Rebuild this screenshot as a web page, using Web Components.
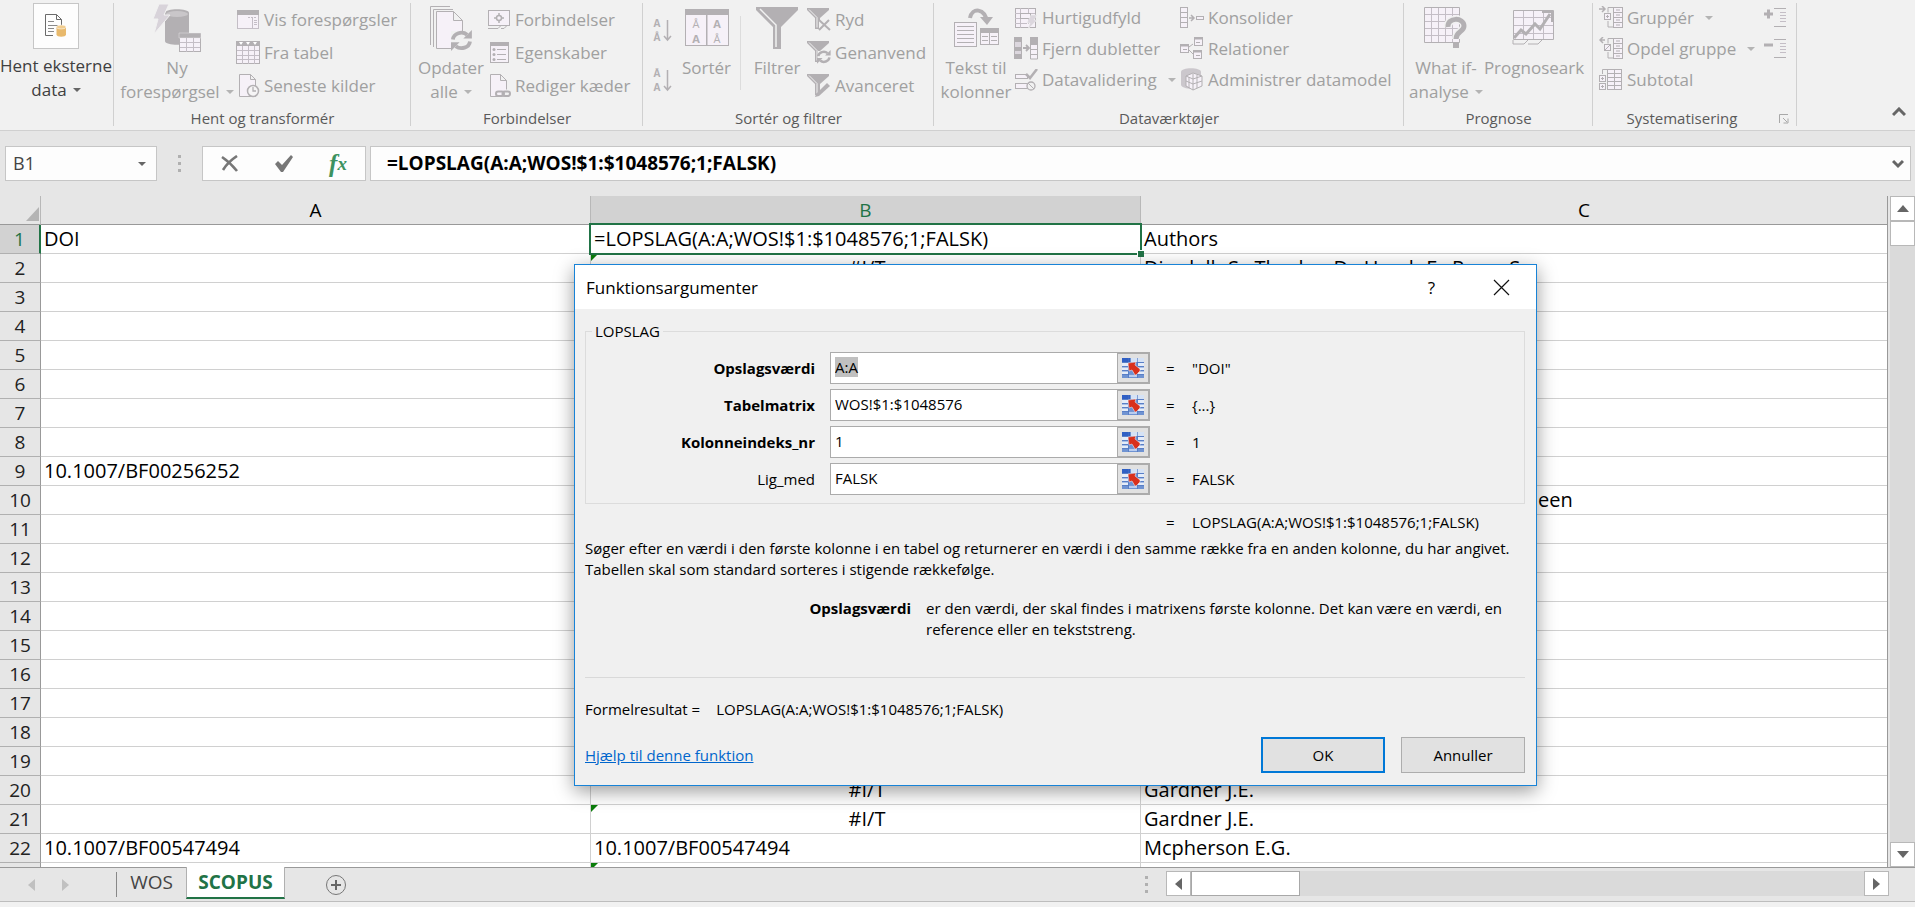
<!DOCTYPE html>
<html lang="da">
<head>
<meta charset="utf-8">
<title>Regneark – Funktionsargumenter</title>
<style>
  html, body { margin: 0; height: 100%; }
  body { font-family: "Open Sans", "Noto Sans", sans-serif; font-size: 17px; color: #000; background: #e6e6e6; overflow: hidden; }
</style>
</head>
<body>
<sheet-app></sheet-app>

<script>
/* ---------- icon library ---------- */
const G = '#b3b0b3', P = '#c4bec6', F = '#f6f1f8';
const svg = (w, h, body) => `<svg width="${w}" height="${h}" viewBox="0 0 ${w} ${h}" fill="none" stroke="${P}" aria-hidden="true">${body}</svg>`;
const funnel = `<path d="M0 0h22v2l-9 8v11h-5V10L0 2z" fill="${G}" stroke="none"/><path d="M2 1.500l8 8v10" stroke="#f1f1f1" stroke-width="1"/>`;
const refresh = (x, y, s) => `<g transform="translate(${x} ${y}) scale(${s})" stroke="${G}" stroke-width="4"><path d="M2 10a9 8 0 0 1 15-5"/><path d="M20 12a9 8 0 0 1-15 5"/><path d="M22 0v9h-9z" fill="${G}" stroke="none"/><path d="M0 22v-9h9z" fill="${G}" stroke="none"/></g>`;
const letter = (x, y, t, s, w) => `<text x="${x}" y="${y}" font-family="Open Sans" font-size="${s}" font-weight="${w}" fill="${G}" stroke="none" text-anchor="middle">${t}</text>`;
const outline = mark => `<path d="M14 1.500h-5v5M9 15v6h5" stroke="${G}"/><rect x="5.500" y="7.500" width="6" height="6" fill="${F}" stroke="${G}"/>${mark}<rect x="14.500" y="1.500" width="9" height="20" fill="${F}" stroke="${G}"/><path d="M14 6.500h9M14 11.500h9M14 16.500h9M17 4h4M17 9h4M17 14h4M17 19h4" stroke="${G}"/>`;

const ICONS = {
  external: svg(24, 26, `<path d="M1.500 1.500h11l5 5v8M12.500 1.500v5h5M9 22.500H1.500v-21" stroke="#6a6a6a"/><path d="M4 8.500h6M4 12.500h10M4 15.500h6M4 18.500h6" stroke="#8a8a8a"/><path d="M12.500 14v7.500c0 3 9.500 3 9.500 0V14z" fill="#e8b96c" stroke="none"/><ellipse cx="17.200" cy="14" rx="4.800" ry="2" fill="#f1cd90" stroke="#fff" stroke-width=".5"/>`),
  query: svg(48, 49, `<path d="M12 9c0-5 24-5 24 0v28c0 5-24 5-24 0z" fill="${G}" stroke="none"/><ellipse cx="24" cy="10" rx="11" ry="3" fill="#c9c6c9" stroke="none"/><path d="M6 0h10l-5 11h6L1 30l4-15H0z" fill="#d8d3da" stroke="#f1f1f1"/><rect x="26.500" y="29.500" width="21" height="18" fill="${F}" stroke="${G}"/><path d="M26 29h22v5H26z" fill="${G}" stroke="#f1f1f1" stroke-width=".4"/><path d="M33.500 34v14M40.500 34v14M27 38.500h20M27 43.500h20"/>`),
  show: svg(24, 22, `<rect x="1.500" y="1.500" width="21" height="18" fill="${F}"/><path d="M1 1h22v5H1z" fill="${G}" stroke="none"/><path d="M12 8.500h9" stroke-dasharray="2 1"/><path d="M16.500 9v10M18 11.500h3M18 13.500h3M18 15.500h3"/>`),
  table: svg(24, 24, `<rect x=".500" y=".500" width="23" height="22" fill="${F}" stroke="${G}"/><path d="M0 0h24v5H0z" fill="${G}" stroke="none"/><path d="M3 1h4l-2 3zM10 1h4l-2 3zM17 1h4l-2 3z" fill="#fff" stroke="none"/><path d="M6.500 5v18M12.500 5v18M18.500 5v18M1 9.500h22M1 14.500h22M1 18.500h22"/>`),
  recent: svg(24, 24, `<path d="M3.500.500h11l5 5v17h-16zM14.500.500v5h5" fill="${F}" stroke="${G}"/><circle cx="17" cy="17" r="5.500" fill="#f6f5f6" stroke="${G}" stroke-width="1.500"/><path d="M17 13v4h3" stroke="${G}" stroke-width="1.300"/>`),
  refreshAll: svg(44, 46, `<path d="M21 1.500H1.500V40M24 4.500H4.500V42" stroke="${G}"/><path d="M7.500 6.500h17l9 9v28h-26zM24.500 6.500v9h9" fill="${F}" stroke="${G}"/><path d="M22 26h22v20H22z" fill="#f1f1f1" stroke="none"/>${refresh(22, 25, .95)}`),
  connections: svg(24, 22, `<rect x="1.500" y="1.500" width="21" height="15" fill="${F}" stroke="${G}"/><path d="M1 19.500h10l3-3M14 19.500h3l3-3" stroke="${G}"/><circle cx="12" cy="9" r="2.500" stroke="${G}" stroke-width="1.500"/><path d="M12 4v3M12 11v3M7 9h3M14 9h3" stroke="${G}" stroke-width="1.500"/>`),
  properties: svg(24, 23, `<rect x="3.500" y="1.500" width="18" height="20" fill="${F}" stroke="${G}"/><path d="M3 1h19v4H3z" fill="${G}" stroke="none"/><path d="M10 8.500h9M10 13.500h9M10 18.500h9" stroke="${G}"/><g fill="${G}" stroke="none"><circle cx="7" cy="8.500" r="1.500"/><circle cx="7" cy="13.500" r="1.500"/><circle cx="7" cy="18.500" r="1.500"/></g>`),
  links: svg(24, 24, `<path d="M12 22.500H3.500V.500h10l6 6v9M13.500.500v6h6" fill="${F}" stroke="${G}"/><rect x="9" y="17.500" width="8" height="4.500" rx="2.200" stroke="${G}" stroke-width="2"/><rect x="15.500" y="17.500" width="7.500" height="4.500" rx="2.200" stroke="${G}" stroke-width="2"/>`),
  sortAsc: svg(20, 25, `${letter(5, 9, 'A', 10, 700)}${letter(5, 23, 'Å', 10, 700)}<path d="M15.500 2v20M12 18l3.500 4 3.500-4" stroke="${G}" stroke-width="1.500"/>`),
  sortDesc: svg(20, 25, `${letter(5, 9, 'Å', 10, 700)}${letter(5, 23, 'A', 10, 700)}<path d="M15.500 2v20M12 18l3.500 4 3.500-4" stroke="${G}" stroke-width="1.500"/>`),
  sort: svg(44, 38, `<rect x=".500" y=".500" width="43" height="36" fill="${F}" stroke="${G}"/><path d="M0 0h44v6H0zM21 6h1.500v31H21z" fill="${G}" stroke="none"/>${letter(11, 19, 'Å', 11, 400)}${letter(11, 34, 'A', 11, 700)}${letter(32, 19, 'A', 11, 700)}${letter(32, 34, 'Å', 11, 400)}`),
  filter: svg(42, 42, `<path d="M0 0h42v3L25 20v22h-8V20L0 3z" fill="${G}" stroke="none"/><path d="M4 2l16 16v22" stroke="#f1f1f1" stroke-width="1.500"/>`),
  clear: svg(24, 24, `${funnel}<path d="M12 12h12v12H12z" fill="#f1f1f1" stroke="none"/><path d="M12 12l11 10M22 12L12 22" stroke="${G}" stroke-width="2"/>`),
  reapply: svg(24, 24, `${funnel}<path d="M11 10h13v14H11z" fill="#f1f1f1" stroke="none"/>${refresh(10, 9, .62)}`),
  advanced: svg(24, 24, `${funnel}<path d="M24 8v16H8z" fill="#f1f1f1" stroke="none"/><path d="M9 20L20 9l3 3-11 10-4 1z" fill="${G}" stroke="none"/>`),
  textToCols: svg(46, 40, `<path d="M17 10c2-11 15-10 17 4" stroke="${G}" stroke-width="4"/><path d="M27 9l7 8 6-8z" fill="${G}" stroke="none"/><rect x="1.500" y="14.500" width="22" height="24" fill="${F}" stroke="${G}"/><path d="M4 18.500h17M4 22.500h17M4 26.500h17M4 30.500h17M4 34.500h17" stroke="${G}"/><rect x="27.500" y="20.500" width="18" height="16" fill="${F}" stroke="${G}"/><path d="M27 20h19v5H27z" fill="${G}" stroke="none"/><path d="M36.500 25v12M29 28.500h6M29 32.500h6M38 28.500h6M38 32.500h6" stroke="${G}"/>`),
  flash: svg(24, 22, `<rect x="1.500" y="1.500" width="20" height="19" fill="${F}" stroke="${G}"/><path d="M1 6.500h20M1 11.500h20M1 16.500h12M6.500 1v5M6.500 11v10M14.500 1v5M14.500 11v6"/><rect x="6.500" y="6.500" width="10" height="5" stroke="${G}"/><path d="M17 8h6l-3 5h3l-9 9 2-6h-3z" fill="#dcd7de" stroke="#f1f1f1" stroke-width=".5"/>`),
  dupes: svg(24, 23, `<path d="M0 0h8v22H0zM16 0h8v8h-8z" fill="${G}" stroke="none"/><path d="M1 5h6v5H1zM1 14h6v3H1z" fill="#dcd7de" stroke="none"/><path d="M16.500 8v14h7V8M16.500 12.500h7M16.500 17.500h7" fill="${F}" stroke="${G}"/><path d="M9 11h5M12 8l3 3-3 3" stroke="${G}" stroke-width="1.800"/>`),
  validate: svg(24, 22, `<rect x="1.500" y="5.500" width="12" height="4" fill="${F}" stroke="${G}"/><rect x="1.500" y="14.500" width="12" height="5" fill="${F}" stroke="${G}"/><path d="M12 5l4 4 7-9" stroke="${G}" stroke-width="2.500"/><circle cx="17" cy="17" r="4" fill="#f1f1f1" stroke="${G}" stroke-width="1.300"/><path d="M14 14l6 6" stroke="${G}"/>`),
  consolidate: svg(24, 22, `<rect x=".500" y=".500" width="7" height="20" fill="${F}" stroke="${G}"/><path d="M1 5.500h6M1 10.500h6M1 15.500h6" stroke="${G}"/><path d="M9 11h5M11 8l3 3-3 3" stroke="${G}" stroke-width="1.500"/><rect x="16.500" y="9.500" width="7" height="3" fill="${F}" stroke="${G}"/>`),
  relations: svg(24, 23, `<g fill="${F}" stroke="${G}"><rect x=".500" y="7.500" width="8" height="8"/><rect x="14.500" y=".500" width="8" height="8"/><rect x="13.500" y="13.500" width="8" height="8"/></g><path d="M1 8.500h8M14 1.500h9M13 14.500h9" stroke="${G}" stroke-width="2"/><path d="M9 10l4-3M9 13l4 4M3 12.500h4M16 5.500h4M16 18.500h4" stroke="${G}"/>`),
  model: svg(24, 23, `<path d="M1 4c0-5 20-5 20 0v13c-2 5-18 5-20 0z" fill="#cbc7cc" stroke="none"/><path d="M13 5l9 3v10l-9 4-7-4V8z" fill="${F}" stroke="${G}"/><path d="M13 6v16M6 8l7 3 9-3M6 13l7 3 9-3M17 7v13M9 9v11" stroke="${G}"/>`),
  whatIf: svg(44, 42, `<path d="M.500.500h35v35H.500z" fill="${F}" stroke="${G}"/><path d="M7.500 1v34M14.500 1v34M21.500 1v34M28.500 1v34M1 7.500h34M1 14.500h34M1 21.500h34M1 28.500h34"/><path d="M24 20c-1-10 17-10 16-1 0 6-8 5-8 13" stroke="#f1f1f1" stroke-width="8"/><path d="M24 20c-1-10 16-10 16-1 0 6-8 5-8 13" stroke="${G}" stroke-width="5"/><path d="M29 36h6v5h-6z" fill="${G}" stroke="none"/>`),
  forecast: svg(44, 38, `<path d="M1.500 1.500h40v29h-40z" fill="${F}" stroke="${G}"/><path d="M11.500 2v28M21.500 2v28M31.500 2v28M2 8.500h39M2 16.500h39M2 24.500h39"/><path d="M1 31v4h11l4-4M16 35h10l4-4" stroke="${G}"/><path d="M2 29l7-8 5 4 9-10 5 5L38 5" stroke="${G}" stroke-width="3"/><path d="M30 3h10v10" stroke="${G}" stroke-width="2"/>`),
  group: svg(24, 23, outline(`<path d="M7 10.500h3M8.500 9v3" stroke="${G}"/><path d="M0 3h5M3 0l3 3-3 3" stroke="${G}" stroke-width="1.500"/>`)),
  ungroup: svg(24, 23, outline(`<path d="M6 13l5-5" stroke="${G}"/><path d="M6 3H1M4 0L1 3l3 3" stroke="${G}" stroke-width="1.500"/>`)),
  subtotal: svg(24, 23, `<path d="M3.500 6V1.500H8" stroke="${G}"/><rect x="8.500" y="1.500" width="14" height="20" fill="${F}" stroke="${G}"/><path d="M15.500 1v20M8 5.500h15M8 9.500h15M8 13.500h15M8 17.500h15" stroke="${G}"/><rect x=".500" y="7.500" width="6" height="6" fill="${F}" stroke="${G}"/><rect x=".500" y="15.500" width="6" height="6" fill="${F}" stroke="${G}"/><path d="M2 10.500h3M3.500 9v3M2 18.500h3M3.500 17v3" stroke="${G}"/>`),
  expand: svg(23, 20, `<path d="M0 6h9M4.500 1.500v9" stroke="${G}" stroke-width="3"/><path d="M10 .500h12M10 18.500h12" stroke="${G}"/><path d="M16 4.500h6M16 7.500h6M16 10.500h6M16 13.500h6"/>`),
  collapse: svg(23, 20, `<path d="M0 6h9" stroke="${G}" stroke-width="3"/><path d="M10 .500h12M10 18.500h12" stroke="${G}"/><path d="M16 4.500h6M16 7.500h6M16 10.500h6M16 13.500h6"/>`),
  launcher: svg(10, 10, `<path d="M.500 9V.500H9M4 4l4 4M9 4.500V9H4.500" stroke="#a8a8a8"/>`),
  chevronUp: svg(14, 10, `<path d="M1 8l6-6 6 6" stroke="#666" stroke-width="3"/>`),
  chevronDown: svg(12, 10, `<path d="M1 2l5 5 5-5" stroke="#666" stroke-width="3"/>`),
  cancel: svg(18, 17, `<path d="M1 2c6 4 11 9 15 14M16 1C10 5 5 10 2 15" stroke="#777" stroke-width="2.600"/>`),
  accept: svg(20, 17, `<path d="M1 9l3-3 4 4L17 0l2 2L9 17H7z" fill="#777" stroke="none"/>`),
  close: svg(17, 17, `<path d="M1 1l15 15M16 1L1 16" stroke="#111" stroke-width="1.200"/>`),
  add: svg(22, 22, `<circle cx="11" cy="11" r="9.500" stroke="#777"/><path d="M11 6v10M6 11h10" stroke="#666" stroke-width="2"/>`),
  corner: svg(14, 14, `<path d="M13 0v14H0z" fill="#b4b4b4" stroke="none"/>`),
  pick: svg(24, 22, `<rect x="1" y="1" width="22" height="20" fill="#6f93d2" stroke="none"/><path d="M1 1h8v4H1z" fill="#2f5fc4" stroke="none"/><path d="M10 1h13v4H10z" fill="#d5e2f5" stroke="none"/><path d="M1 6h6v3H1zM1 10.500h6V13H1zM1 14.500h6V17H1zM17 6h6v3h-6zM17 10.500h6V13h-6zM17 14.500h6V17h-6z" fill="#e4ecf9" stroke="none"/><path d="M8 17h8v3H8z" fill="#b9cdf0" stroke="none"/><path d="M1 5.500h22M1 9.500h22M1 13.500h22M1 17.500h22M7.500 1v20M16.500 1v20" stroke="#4a72bd" stroke-width=".6"/><path d="M7 6l8-1-1 3 5 4v2l-4 4h-1l-3-5-3 1z" fill="#d9301c" stroke="#fff" stroke-width=".5"/>`),
};
for (const [name, dir] of Object.entries({ up: 'M0 7l6-7 6 7z', down: 'M0 0h12l-6 7z' })) ICONS['arrow-' + name] = svg(12, 7, `<path d="${dir}" fill="#666" stroke="none"/>`);
for (const [name, dir] of Object.entries({ left: 'M7 0v12L0 6z', right: 'M0 0v12l7-6z' })) ICONS['arrow-' + name] = svg(7, 12, `<path d="${dir}" fill="currentColor" stroke="none"/>`);

const define = (name, html, setup) => customElements.define(name, class extends HTMLElement {
  constructor() { super(); this.attachShadow({ mode: 'open' }).innerHTML = html; }
  connectedCallback() { setup && setup(this, this.shadowRoot); }
});

define('ui-icon', '<style>:host{display:inline-flex;flex:none}svg{display:block}</style><span></span>',
  (host, root) => { root.querySelector('span').innerHTML = ICONS[host.getAttribute('name')]; });

/* ---------- ribbon ---------- */
define('ribbon-group', `<style>
  :host { display: flex; flex-direction: column; height: 130px; box-sizing: border-box; position: relative; }
  :host::after { content: ""; position: absolute; right: 0; top: 3px; bottom: 4px; width: 1px; background: #d0d0d0; }
  .body { display: flex; height: 106px; }
  footer { display: flex; align-items: center; justify-content: center; height: 24px; line-height: 24px; font-size: 15px; color: #5a5a5a; }
  :host([launcher]) footer { padding-right: 26px; }
  ::slotted([slot=launcher]) { position: absolute; right: 8px; bottom: 6px; }
</style><div class="body"><slot></slot></div><footer><span></span><slot name="launcher"></slot></footer>`,
  (host, root) => { root.querySelector('span').textContent = host.getAttribute('label') || ''; });

define('ribbon-stack', `<style>
  :host { display: flex; flex-direction: column; padding-top: 2px; box-sizing: border-box; --row: 31px; }
  :host([loose]) { padding-top: 3px; --row: 33px; }
</style><slot></slot>`);

define('ribbon-button', `<style>
  :host { display: block; flex: none; }
  button { all: unset; box-sizing: border-box; display: flex; align-items: center; gap: 4px; height: var(--row, 31px); width: 100%; white-space: nowrap; color: #a0a0a0; line-height: 24px; }
  .icon { display: flex; align-items: center; justify-content: center; min-width: 24px; }
  :host([big]) button { flex-direction: column; height: auto; gap: 0; text-align: center; }
  :host([big]) .icon { height: 56px; }
  :host([enabled]) button { color: #404040; }
  :host([enabled]) .icon { height: 44px; width: 44px; margin: 3px 0 5px; background: #fdfdfd; border: 1px solid #c6c6c6; }
  .drop::after { content: ""; display: inline-block; margin-left: 6px; vertical-align: 4px; border: 4px solid transparent; border-top: 4px solid #b4b4b4; border-bottom: 0; }
  :host([wide]) .drop::after { margin-left: 11px; }
  :host([enabled]) .drop::after { border-top-color: #666; }
</style><button type="button"><span class="icon"></span><span class="text"><slot></slot></span></button>`,
  (host, root) => {
    root.querySelector('.icon').innerHTML = ICONS[host.getAttribute('icon')];
    if (host.hasAttribute('drop')) root.querySelector('.text').classList.add('drop');
    if (host.hasAttribute('label')) root.querySelector('button').setAttribute('aria-label', host.getAttribute('label'));
  });

define('data-ribbon', `<style>
  :host { display: grid; grid-template-columns: 114px 297px 232px 291px 470px 189px 204px 1fr; height: 130px; flex: none; background: #f1f1f1; border-bottom: 1px solid #d0d0d0; overflow: hidden; }
  .sorts { display: flex; flex-direction: column; gap: 20px; padding: 18px 10px 0 9px; }
  .sorts button, .fold button { all: unset; }
  .line { width: 1px; height: 74px; margin: 16px 6px 0 9px; background: #dcdcdc; flex: none; }
  .levels { margin-left: auto; padding-right: 6px; }
  .fold { display: flex; justify-content: flex-end; align-items: flex-end; padding: 0 9px 8px 0; }
  .w112 { width: 112px; } .w118 { width: 118px; } .w72 { width: 72px; } .w60 { width: 60px; } .w76 { width: 76px; } .w100 { width: 100px; }
  .pad { padding-left: 4px; } .pad6 { padding-left: 6px; }
  .first { width: 166px; }
</style>
<ribbon-group><ribbon-button big enabled drop icon="external" class="w112">Hent eksterne<br>data</ribbon-button></ribbon-group>
<ribbon-group label="Hent og transformér">
  <ribbon-button big drop icon="query" class="w118 pad">Ny<br>forespørgsel</ribbon-button>
  <ribbon-stack loose>
    <ribbon-button icon="show">Vis forespørgsler</ribbon-button>
    <ribbon-button icon="table">Fra tabel</ribbon-button>
    <ribbon-button icon="recent">Seneste kilder</ribbon-button>
  </ribbon-stack>
</ribbon-group>
<ribbon-group label="Forbindelser">
  <ribbon-button big drop icon="refreshAll" class="w72 pad">Opdater<br>alle</ribbon-button>
  <ribbon-stack loose>
    <ribbon-button icon="connections">Forbindelser</ribbon-button>
    <ribbon-button icon="properties">Egenskaber</ribbon-button>
    <ribbon-button icon="links">Rediger kæder</ribbon-button>
  </ribbon-stack>
</ribbon-group>
<ribbon-group label="Sortér og filtrer">
  <div class="sorts"><button type="button" aria-label="Sortér stigende"><ui-icon name="sortAsc"></ui-icon></button><button type="button" aria-label="Sortér faldende"><ui-icon name="sortDesc"></ui-icon></button></div>
  <ribbon-button big icon="sort">Sortér</ribbon-button>
  <div class="line"></div>
  <ribbon-button big icon="filter" class="w60">Filtrer</ribbon-button>
  <ribbon-stack loose>
    <ribbon-button icon="clear">Ryd</ribbon-button>
    <ribbon-button icon="reapply">Genanvend</ribbon-button>
    <ribbon-button icon="advanced">Avanceret</ribbon-button>
  </ribbon-stack>
</ribbon-group>
<ribbon-group label="Dataværktøjer">
  <ribbon-button big icon="textToCols" class="w76 pad">Tekst til<br>kolonner</ribbon-button>
  <ribbon-stack class="first">
    <ribbon-button icon="flash">Hurtigudfyld</ribbon-button>
    <ribbon-button icon="dupes">Fjern dubletter</ribbon-button>
    <ribbon-button icon="validate" drop wide>Datavalidering</ribbon-button>
  </ribbon-stack>
  <ribbon-stack>
    <ribbon-button icon="consolidate">Konsolider</ribbon-button>
    <ribbon-button icon="relations">Relationer</ribbon-button>
    <ribbon-button icon="model">Administrer datamodel</ribbon-button>
  </ribbon-stack>
</ribbon-group>
<ribbon-group label="Prognose">
  <ribbon-button big drop icon="whatIf" class="w76 pad">What if-<br>analyse</ribbon-button>
  <ribbon-button big icon="forecast" class="w100">Prognoseark</ribbon-button>
</ribbon-group>
<ribbon-group label="Systematisering" launcher>
  <ribbon-stack class="pad6">
    <ribbon-button icon="group" drop wide>Gruppér</ribbon-button>
    <ribbon-button icon="ungroup" drop wide>Opdel gruppe</ribbon-button>
    <ribbon-button icon="subtotal">Subtotal</ribbon-button>
  </ribbon-stack>
  <ribbon-stack class="levels">
    <ribbon-button icon="expand" label="Vis detaljer"></ribbon-button>
    <ribbon-button icon="collapse" label="Skjul detaljer"></ribbon-button>
  </ribbon-stack>
  <ui-icon slot="launcher" name="launcher"></ui-icon>
</ribbon-group>
<div class="fold"><button type="button" aria-label="Skjul båndet"><ui-icon name="chevronUp"></ui-icon></button></div>`);

/* ---------- formula bar ---------- */
define('formula-bar', `<style>
  :host { display: flex; align-items: flex-start; height: 50px; flex: none; padding: 15px 4px 0 5px; }
  .box { display: flex; align-items: center; height: 35px; box-sizing: border-box; background: #fdfdfd; border: 1px solid #c6c6c6; }
  input { all: unset; min-width: 0; flex: 1; line-height: 33px; }
  button { all: unset; display: flex; align-items: center; justify-content: center; }
  .name { width: 152px; padding: 0 10px 0 7px; color: #444; font-size: 18px; }
  .name i { border: 4px solid transparent; border-top-color: #666; border-bottom: 0; }
  .grip { width: 45px; height: 34px; display: flex; flex-direction: column; align-items: center; justify-content: center; gap: 4px; }
  .grip i { width: 3px; height: 3px; background: #b0b0b0; }
  .tools { width: 164px; margin-right: 4px; }
  .tools button { flex: 1; }
  .fx { color: #3c9260; font: italic bold 25px/28px "Liberation Serif", serif; }
  .fx small { font-size: 19px; }
  .formula { flex: 1; padding: 0 6px 0 16px; }
  .formula input { font-size: 19px; font-weight: 700; }
</style>
<div class="box name"><input aria-label="Navneboks" value="B1"><button type="button" aria-label="Vis navne"><i></i></button></div>
<div class="grip"><i></i><i></i><i></i></div>
<div class="box tools"><button type="button" aria-label="Annuller"><ui-icon name="cancel"></ui-icon></button><button type="button" aria-label="Angiv"><ui-icon name="accept"></ui-icon></button><button type="button" class="fx" aria-label="Indsæt funktion">f<small>x</small></button></div>
<div class="box formula"><input aria-label="Formellinje" value="=LOPSLAG(A:A;WOS!$1:$1048576;1;FALSK)"><button type="button" aria-label="Udvid formellinje"><ui-icon name="chevronDown"></ui-icon></button></div>`);

/* ---------- grid ---------- */
const CELLS = {
  A1: 'DOI', B1: '=LOPSLAG(A:A;WOS!$1:$1048576;1;FALSK)', C1: 'Authors',
  B2: '#I/T', C2: 'Dimdalh S., Theskar D., Hasch F., Perez S.',
  A9: '10.1007/BF00256252', C10: 'een',
  B20: '#I/T', C20: 'Gardner J.E.', B21: '#I/T', C21: 'Gardner J.E.',
  A22: '10.1007/BF00547494', B22: '10.1007/BF00547494', C22: 'Mcpherson E.G.',
};
const FLAGS = ['B2', 'B20', 'B21', 'B23'];
define('sheet-grid', `<style>
  :host { display: block; flex: 1; min-width: 0; overflow: hidden; background: #fff; border-right: 1px solid #999; }
  /* column C runs on past the right edge of the window */
  table { table-layout: fixed; width: calc(100% + 141px); border-collapse: separate; border-spacing: 0; font-size: 20px; line-height: 26px; }
  col.head { width: 41px; } col.ab { width: 550px; }
  th, td { height: 28px; padding: 0; white-space: nowrap; position: relative; font-weight: 400; }
  thead th { background: #e6e6e6; border-bottom: 1px solid #999; border-right: 1px solid #b8b8b8; font-size: 19px; }
  thead th.on { background: #d2d2d2; color: #217346; }
  thead ui-icon { position: absolute; right: 0; bottom: 3px; }
  tbody th { background: #e6e6e6; border-right: 1px solid #999; border-bottom: 1px solid #b0b0b0; font-size: 19px; color: #222; }
  tbody th.on { background: #d2d2d2; color: #217346; border-right: 2px solid #217346; }
  td { border-right: 1px solid #d0d0d0; border-bottom: 1px solid #d0d0d0; padding-left: 3px; }
  td.error { text-align: center; }
  td.flag::before { content: ""; position: absolute; left: 0; top: 0; border-top: 7px solid #0a7d0a; border-right: 7px solid transparent; }
  td.active::after { content: ""; position: absolute; z-index: 1; inset: -2px; border: 2px solid #217346; }
  td.active::before { content: ""; position: absolute; z-index: 2; right: -4px; bottom: -4px; width: 6px; height: 6px; background: #217346; border: 1px solid #fff; border-width: 1px 0 0 1px; }
  td.tail { text-indent: 394px; }
</style>
<table><colgroup><col class="head"><col class="ab"><col class="ab"><col></colgroup>
<thead><tr><th scope="col"><ui-icon name="corner"></ui-icon></th><th scope="col">A</th><th scope="col" class="on">B</th><th scope="col">C</th></tr></thead><tbody></tbody></table>`,
  (host, root) => {
    const body = root.querySelector('tbody');
    for (let r = 1; r <= 23; r++) {
      const tr = body.insertRow();
      const th = document.createElement('th');
      th.scope = 'row'; th.textContent = r <= 22 ? r : ''; if (r === 1) th.className = 'on';
      tr.append(th);
      for (const c of 'ABC') {
        const td = tr.insertCell(), id = c + r;
        td.textContent = CELLS[id] || '';
        if (CELLS[id] === '#I/T') td.classList.add('error');
        if (FLAGS.includes(id)) td.classList.add('flag');
        if (id === 'B1') td.classList.add('active');
        if (id === 'C10') td.classList.add('tail');
      }
    }
  });

define('scroll-bar', `<style>
  :host { display: flex; flex-direction: column; background: #dadada; color: #666; }
  :host([horizontal]) { flex-direction: row; }
  button, i { all: unset; box-sizing: border-box; width: 25px; height: 25px; flex: none; background: #fff; border: 1px solid #b8b8b8; display: flex; align-items: center; justify-content: center; }
  i { margin-bottom: auto; }
  :host([horizontal]) i { width: 109px; margin: 0 auto 0 0; border-color: #a8a8a8; }
</style><button type="button" class="a"></button><i></i><button type="button" class="b"></button>`,
  (host, root) => {
    const h = host.hasAttribute('horizontal');
    const a = root.querySelector('.a'), b = root.querySelector('.b');
    a.innerHTML = ICONS[h ? 'arrow-left' : 'arrow-up']; a.ariaLabel = h ? 'Rul til venstre' : 'Rul op';
    b.innerHTML = ICONS[h ? 'arrow-right' : 'arrow-down']; b.ariaLabel = h ? 'Rul til højre' : 'Rul ned';
  });

/* ---------- sheet tabs ---------- */
define('sheet-tabs', `<style>
  :host { display: flex; align-items: flex-start; height: 33px; flex: none; border-top: 1px solid #999; border-bottom: 1px solid #bdbdbd; font-size: 19px; padding-right: 26px; }
  button { all: unset; box-sizing: border-box; display: flex; align-items: center; justify-content: center; }
  .nav { display: flex; align-items: center; width: 117px; height: 25px; margin-top: 4px; padding-left: 14px; box-sizing: border-box; border-right: 1px solid #888; color: #c0c0c0; }
  .nav button { width: 34px; height: 24px; }
  .tab { height: 28px; width: 69px; color: #444; }
  .tab.on { width: 99px; height: 32px; margin-top: -1px; background: #fff; color: #217346; font-weight: 700; border: 1px solid #b0b0b0; border-width: 0 1px 2px; border-bottom-color: #217346; }
  .add { margin: 6px auto 0 40px; }
  .grip { display: flex; flex-direction: column; gap: 4px; padding: 8px 18px 0 0; }
  .grip i { width: 3px; height: 3px; background: #b0b0b0; }
  scroll-bar { width: calc(38% + 5px); margin-top: 3px; height: 25px; }
</style>
<div class="nav"><button type="button" aria-label="Forrige ark"><ui-icon name="arrow-left"></ui-icon></button><button type="button" aria-label="Næste ark"><ui-icon name="arrow-right"></ui-icon></button></div>
<button type="button" class="tab">WOS</button><button type="button" class="tab on">SCOPUS</button>
<button type="button" class="add" aria-label="Nyt ark"><ui-icon name="add"></ui-icon></button>
<div class="grip"><i></i><i></i><i></i></div>
<scroll-bar horizontal></scroll-bar>`);

/* ---------- function arguments dialog ---------- */
define('argument-row', `<style>
  :host { display: grid; grid-template-columns: 244px 320px 42px 1fr; height: 32px; align-items: center; line-height: 20px; }
  label { text-align: right; padding-right: 15px; }
  :host([required]) label { font-weight: 700; }
  .field { display: flex; height: 32px; box-sizing: border-box; border: 1px solid #ababab; background: #fff; }
  input { all: unset; flex: 1; min-width: 0; padding-left: 4px; line-height: 20px; height: 20px; margin-top: 4px; }
  input::selection { background: #c0c0c0; color: #000; }
  button { all: unset; width: 30px; border: 1px solid #ababab; background: #e1e1e1; display: flex; align-items: center; justify-content: center; }
  .eq { padding-left: 16px; }
</style><label for="f"></label><div class="field"><input id="f"><button type="button" aria-label="Vælg område"><ui-icon name="pick"></ui-icon></button></div><span class="eq">=</span><output for="f"><slot></slot></output>`,
  (host, root) => {
    root.querySelector('label').textContent = host.getAttribute('name');
    const input = root.querySelector('input');
    input.value = host.getAttribute('value');
    if (host.hasAttribute('selected')) { input.focus(); input.select(); }
  });

define('function-dialog', `<style>
  :host { display: block; box-sizing: border-box; background: #f0f0f0; border: 1px solid #1883d7; box-shadow: 0 5px 18px rgba(0,0,0,.4); font-size: 15px; line-height: 21px; }
  header { display: flex; align-items: center; height: 44px; background: #fff; padding: 0 26px 0 11px; font-size: 17px; }
  h2 { font: inherit; margin: 0 auto 0 0; }
  header button { all: unset; display: flex; }
  header button + button { margin-left: 58px; }
  .body { padding: 12px 11px 12px 10px; }
  fieldset { margin: 0; padding: 11px 0 8px; border: 1px solid #dcdcdc; display: grid; gap: 5px; min-width: 0; }
  legend { margin-left: 6px; padding: 0 3px; line-height: 20px; }
  .total { display: grid; grid-template-columns: 565px 42px 1fr; margin-top: 8px; }
  .total span { padding-left: 16px; }
  p { margin: 5px 0 0; }
  dl { display: grid; grid-template-columns: 326px 1fr; gap: 15px; margin: 18px 0 37px; }
  dt { font-weight: 700; text-align: right; } dd { margin: 0; }
  .result { border-top: 1px solid #d9d9d9; padding-top: 21px; display: flex; gap: 16px; }
  footer { display: flex; align-items: center; gap: 16px; margin-top: 17px; }
  a { color: #0066cc; margin-right: auto; }
  footer button { font: inherit; color: #000; width: 124px; height: 36px; box-sizing: border-box; padding: 0; border: 1px solid #adadad; background: #e1e1e1; border-radius: 0; }
  footer button.default { border: 2px solid #0078d7; }
</style>
<header><h2>Funktionsargumenter</h2><button type="button" aria-label="Hjælp">?</button><button type="button" aria-label="Luk"><ui-icon name="close"></ui-icon></button></header>
<div class="body">
  <fieldset><legend>LOPSLAG</legend>
    <argument-row required selected name="Opslagsværdi" value="A:A">"DOI"</argument-row>
    <argument-row required name="Tabelmatrix" value="WOS!$1:$1048576">{...}</argument-row>
    <argument-row required name="Kolonneindeks_nr" value="1">1</argument-row>
    <argument-row name="Lig_med" value="FALSK">FALSK</argument-row>
  </fieldset>
  <div class="total"><i></i><span>=</span><output>LOPSLAG(A:A;WOS!$1:$1048576;1;FALSK)</output></div>
  <p>Søger efter en værdi i den første kolonne i en tabel og returnerer en værdi i den samme række fra en anden kolonne, du har angivet. Tabellen skal som standard sorteres i stigende rækkefølge.</p>
  <dl><dt>Opslagsværdi</dt><dd>er den værdi, der skal findes i matrixens første kolonne. Det kan være en værdi, en reference eller en tekststreng.</dd></dl>
  <div class="result"><span>Formelresultat =</span><output>LOPSLAG(A:A;WOS!$1:$1048576;1;FALSK)</output></div>
  <footer><a href="#hjaelp">Hjælp til denne funktion</a><button type="button" class="default">OK</button><button type="button">Annuller</button></footer>
</div>`, host => { host.setAttribute('role', 'dialog'); host.setAttribute('aria-label', 'Funktionsargumenter'); });

/* ---------- application shell ---------- */
define('sheet-app', `<style>
  :host { display: flex; flex-direction: column; height: 100vh; position: relative; background: #e6e6e6; }
  main { flex: 1; min-height: 0; display: flex; gap: 2px; }
  main scroll-bar { width: 25px; flex: none; }
  .status { height: 5px; background: #f1f1f1; flex: none; }
  function-dialog { position: absolute; left: 574px; top: 264px; width: 963px; z-index: 5; }
</style>
<data-ribbon></data-ribbon>
<formula-bar></formula-bar>
<main><sheet-grid></sheet-grid><scroll-bar></scroll-bar></main>
<sheet-tabs></sheet-tabs>
<div class="status"></div>
<function-dialog></function-dialog>`);
</script>
</body>
</html>
